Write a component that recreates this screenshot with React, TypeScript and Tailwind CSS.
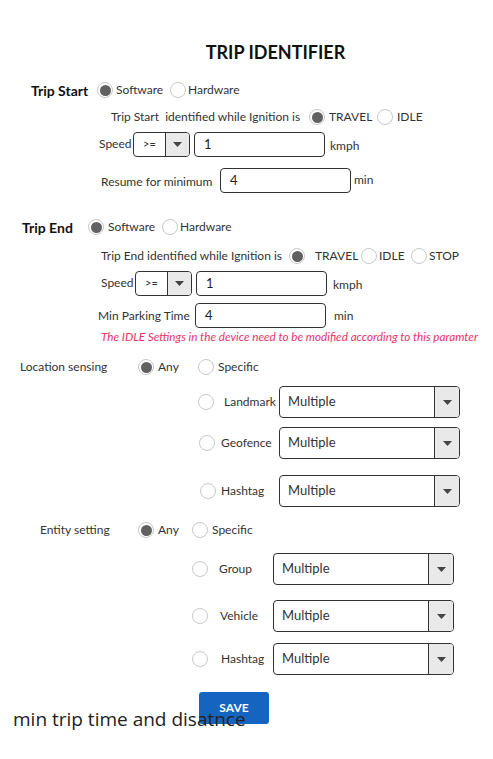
import type { ReactNode } from "react";

function Radio({ checked = false }: { checked?: boolean }) {
  return (
    <span className="flex h-4 w-4 shrink-0 items-center justify-center rounded-full border border-[#c8c8c8] bg-white">
      {checked && <span className="h-[11px] w-[11px] rounded-full bg-[#616161]" />}
    </span>
  );
}

function Caret() {
  return (
    <svg width="9" height="5" viewBox="0 0 9 5" aria-hidden>
      <path d="M0 0h9L4.5 5z" fill="#444" />
    </svg>
  );
}

function OpSelect({ className }: { className: string }) {
  return (
    <div className={`flex h-[25px] w-[57px] shrink-0 overflow-hidden rounded-[4px] border border-[#333] ${className}`}>
      <div className="flex w-[31px] items-center pl-[9px] text-[11px] text-[#333]">&gt;=</div>
      <div className="flex flex-1 items-center justify-center border-l border-[#333] bg-[#e9e9e9]">
        <Caret />
      </div>
    </div>
  );
}

function TextBox({ value, className }: { value: string; className: string }) {
  return (
    <div
      className={`flex h-[25px] w-[131px] shrink-0 items-center rounded-[4px] border border-[#333] pl-[9px] text-[13px] text-[#222] ${className}`}
    >
      {value}
    </div>
  );
}

function MultiSelect({ className }: { className: string }) {
  return (
    <div className={`flex h-[32px] w-[181px] shrink-0 overflow-hidden rounded-[4px] border border-[#333] ${className}`}>
      <div className="flex flex-1 items-center pl-[8px] text-[13px] text-[#333]">Multiple</div>
      <div className="flex w-[25px] items-center justify-center border-l border-[#333] bg-[#e9e9e9]">
        <Caret />
      </div>
    </div>
  );
}

function Row({ className, children }: { className: string; children: ReactNode }) {
  return <div className={`flex items-center ${className}`}>{children}</div>;
}

export default function App() {
  return (
    <div className="min-h-[759px] bg-white pt-[40px] text-[12px] text-[#333] [font-family:Lato,'Noto_Sans',sans-serif]">
      <h1 className="h-[24px] pl-[58px] text-center text-[18px] leading-[24px] font-bold text-[#111]">
        TRIP IDENTIFIER
      </h1>

      {/* trip start */}
      <Row className="mt-[16px] h-[20px] pl-[31px]">
        <span className="w-[66px] text-[14px] font-bold text-[#111]">Trip Start</span>
        <Radio checked />
        <span className="ml-[3px] w-[54px]">Software</span>
        <Radio />
        <span className="ml-[2px]">Hardware</span>
      </Row>
      <Row className="mt-[7px] h-[20px] pl-[111px]">
        <span className="w-[198px]">Trip Start&nbsp; identified while Ignition is</span>
        <Radio checked />
        <span className="ml-[4px] w-[48px]">TRAVEL</span>
        <Radio />
        <span className="ml-[4px]">IDLE</span>
      </Row>
      <Row className="mt-[5px] h-[25px] pl-[99px]">
        <span className="w-[34px] self-start pt-[3px]">Speed</span>
        <OpSelect className="" />
        <TextBox value="1" className="ml-[4px]" />
        <span className="ml-[5px] pt-[3px]">kmph</span>
      </Row>
      <Row className="mt-[11px] h-[25px] pl-[101px]">
        <span className="w-[119px] pt-[2px]">Resume for minimum</span>
        <TextBox value="4" className="w-[130px]" />
        <span className="ml-[3px] self-start pt-[3px]">min</span>
      </Row>

      {/* trip end */}
      <Row className="mt-[24px] h-[20px] pl-[22px]">
        <span className="w-[66px] text-[14px] font-bold text-[#111]">Trip End</span>
        <Radio checked />
        <span className="ml-[4px] w-[54px]">Software</span>
        <Radio />
        <span className="ml-[2px]">Hardware</span>
      </Row>
      <Row className="mt-[9px] h-[20px] pl-[101px]">
        <span className="w-[188px]">Trip End identified while Ignition is</span>
        <Radio checked />
        <span className="ml-[10px] w-[46px]">TRAVEL</span>
        <Radio />
        <span className="ml-[2px] w-[32px]">IDLE</span>
        <Radio />
        <span className="ml-[2px]">STOP</span>
      </Row>
      <Row className="mt-[5px] h-[25px] pl-[101px]">
        <span className="w-[34px] self-start pt-[3px]">Speed</span>
        <OpSelect className="" />
        <TextBox value="1" className="ml-[4px] w-[130px]" />
        <span className="ml-[6px] pt-[3px]">kmph</span>
      </Row>
      <Row className="mt-[7px] h-[25px] pl-[98px]">
        <span className="w-[97px]">Min Parking Time</span>
        <TextBox value="4" className="w-[130px]" />
        <span className="ml-[8px]">min</span>
      </Row>
      <div className="h-[16px] pl-[101px] text-[11.7px] leading-[16px] text-[#e8336b] italic">
        The IDLE Settings in the device need to be modified according to this paramter
      </div>

      {/* location sensing */}
      <Row className="mt-[13px] h-[20px] pl-[20px]">
        <span className="w-[118px]">Location sensing</span>
        <Radio checked />
        <span className="ml-[4px] w-[40px]">Any</span>
        <Radio />
        <span className="ml-[4px]">Specific</span>
      </Row>
      <Row className="mt-[9px] h-[32px] pl-[198px]">
        <Radio />
        <span className="ml-[10px] w-[55px]">Landmark</span>
        <MultiSelect className="" />
      </Row>
      <Row className="mt-[9px] h-[32px] pl-[199px]">
        <Radio />
        <span className="ml-[6px] w-[58px]">Geofence</span>
        <MultiSelect className="" />
      </Row>
      <Row className="mt-[16px] h-[32px] pl-[200px]">
        <Radio />
        <span className="ml-[5px] w-[58px]">Hashtag</span>
        <MultiSelect className="" />
      </Row>

      {/* entity setting */}
      <Row className="mt-[13px] h-[20px] pl-[40px]">
        <span className="w-[98px]">Entity setting</span>
        <Radio checked />
        <span className="ml-[4px] w-[34px]">Any</span>
        <Radio />
        <span className="ml-[4px]">Specific</span>
      </Row>
      <Row className="mt-[13px] h-[32px] pl-[192px]">
        <Radio />
        <span className="ml-[11px] w-[54px]">Group</span>
        <MultiSelect className="" />
      </Row>
      <Row className="mt-[15px] h-[32px] pl-[192px]">
        <Radio />
        <span className="ml-[12px] w-[53px]">Vehicle</span>
        <MultiSelect className="" />
      </Row>
      <Row className="mt-[11px] h-[32px] pl-[192px]">
        <Radio />
        <span className="ml-[13px] w-[52px]">Hashtag</span>
        <MultiSelect className="" />
      </Row>

      <div className="mt-[17px] pl-[199px]">
        <button
          type="button"
          className="h-[32px] w-[70px] rounded-[3px] bg-[#1565c0] text-[12px] font-bold text-white"
        >
          SAVE
        </button>
      </div>
      <p className="-mt-[18px] pl-[13px] text-[19px] leading-[26px] text-[#222] [font-family:'Open_Sans',sans-serif]">
        min trip time and disatnce
      </p>
    </div>
  );
}
